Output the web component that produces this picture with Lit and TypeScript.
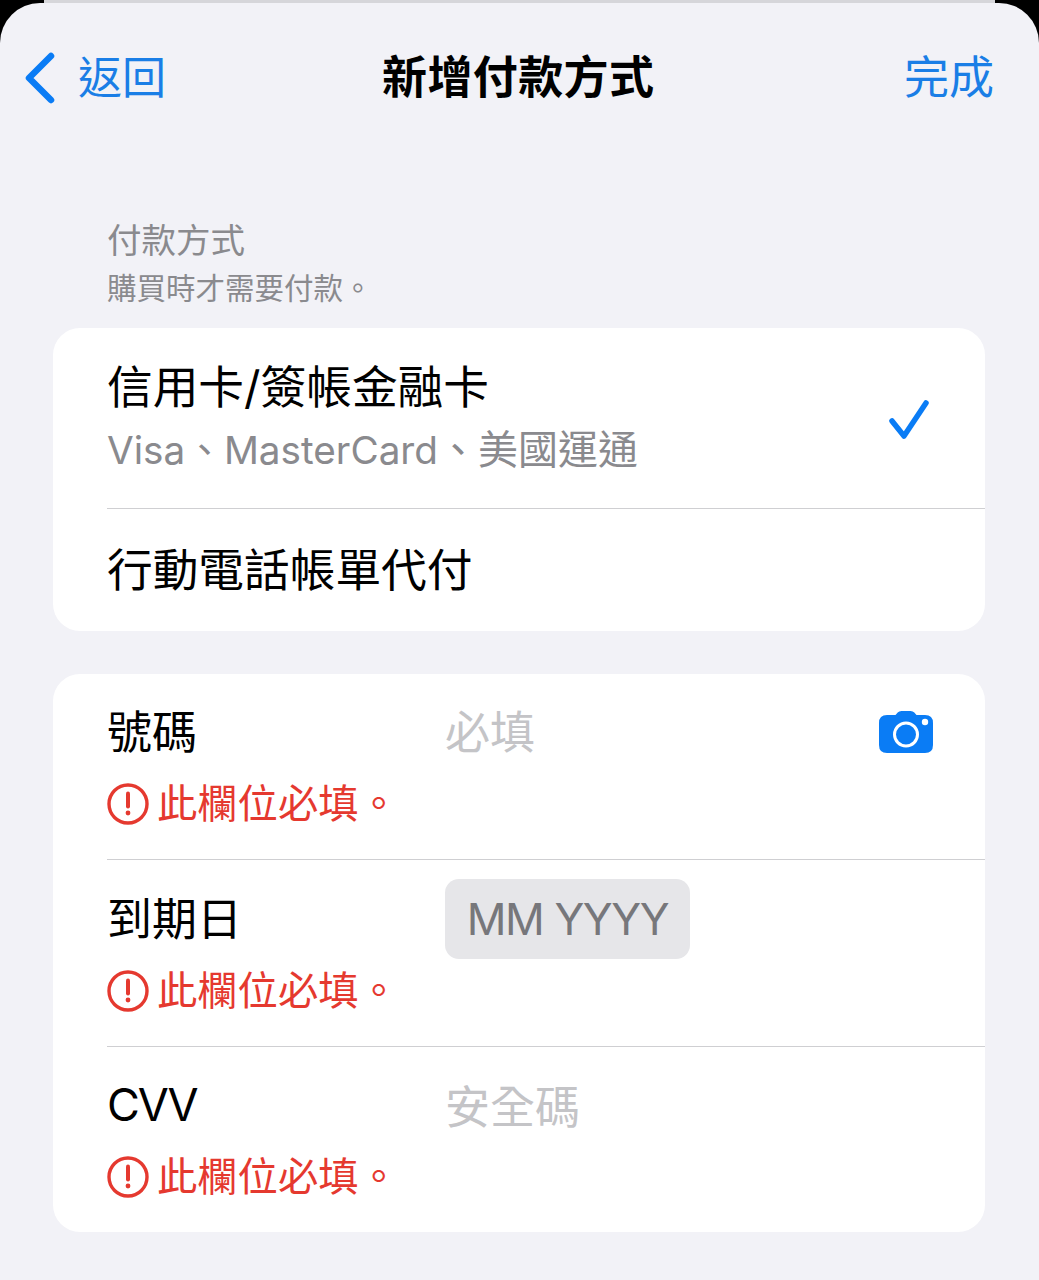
import { html, css, LitElement, svg } from 'lit'
import { customElement } from 'lit/decorators.js'

const errorIcon = svg`<svg class="err-icon" viewBox="0 0 42 42" width="42" height="42">
  <circle cx="21" cy="21" r="19" fill="none" stroke="#e5392f" stroke-width="3.4"></circle>
  <path d="M21 10.5v13" stroke="#e5392f" stroke-width="4" stroke-linecap="round"></path>
  <circle cx="21" cy="30" r="2.4" fill="#e5392f"></circle>
</svg>`

@customElement('app-root')
export class AppRoot extends LitElement {
  static styles = css`
    :host {
      display: block;
      height: 1280px;
      overflow: hidden;
      font-family: Inter, "Noto Sans CJK TC", sans-serif;
      color: #000;
    }
    .frame {
      height: 100%;
      padding-top: 3px;
      box-sizing: border-box;
      background: linear-gradient(90deg, #000 44px, #d6d6da 44px, #d6d6da 995px, #000 995px);
    }
    .sheet {
      height: 100%;
      background: #f2f2f7;
      border-radius: 40px 40px 0 0;
      padding: 0 54px 0 53px;
      box-sizing: border-box;
    }
    .nav {
      display: grid;
      grid-template-columns: 358px auto 1fr;
      align-items: center;
      height: 150px;
      margin: 0 -9px 0 -29px;
      font-size: 44px;
      line-height: 50px;
      color: #1a7ee6;
    }
    .back {
      display: flex;
      align-items: center;
      gap: 22px;
    }
    .title {
      font-size: 45px;
      font-weight: 700;
      color: #000;
      letter-spacing: 0.4px;
    }
    .done {
      text-align: right;
      font-size: 45px;
    }
    .section {
      padding: 68px 0 21px 54px;
      color: #8a8a8e;
    }
    .section-title {
      font-size: 34.5px;
      line-height: 40px;
    }
    .section-sub {
      font-size: 29.5px;
      line-height: 38px;
      margin-top: 8px;
    }
    .card {
      background: #fff;
      border-radius: 27px;
      margin-bottom: 43px;
      padding-left: 54px;
    }
    .row {
      border-bottom: 1px solid #cfcfd2;
    }
    .row:last-child { border-bottom: 0; }
    .pay {
      display: flex;
      align-items: center;
      justify-content: space-between;
      padding-right: 54px;
    }
    .pay-first { height: 180px; }
    .pay-second {
      height: 122px;
      padding-top: 2px;
      box-sizing: border-box;
    }
    .pay-text { margin-bottom: 2px; }
    .pay-main {
      font-size: 45.7px;
      line-height: 56px;
    }
    .pay-sub {
      font-size: 38.7px;
      line-height: 50px;
      color: #8a8a8e;
      margin-top: 9px;
    }
    .pay-sub span { font-size: 40px; }
    .field {
      height: 185.5px;
      padding-right: 52px;
      box-sizing: border-box;
      padding-top: 25px;
    }
    .field:first-child { padding-top: 23px; }
    .field:first-child .error { margin-top: 18px; }
    .field-top {
      display: grid;
      grid-template-columns: 338px 1fr auto;
      align-items: center;
      height: 64px;
      font-size: 45px;
    }
    .latin { letter-spacing: -2px; }
    .camera { margin-top: 4px; }
    .placeholder { color: #c4c4c7; }
    .date {
      width: 245px;
      height: 80px;
      border-radius: 14px;
      background: #e6e6e9;
      color: #77777b;
      font-size: 44px;
      display: flex;
      align-items: center;
      justify-content: center;
      letter-spacing: -1.4px;
    }
    .date-row {
      height: 187px;
      padding-top: 19px;
    }
    .date-row .field-top { height: 80px; }
    .date-label { padding-bottom: 4px; }
    .error {
      display: flex;
      align-items: center;
      gap: 8px;
      margin-top: 16px;
      font-size: 40.3px;
      line-height: 50px;
      color: #e5392f;
    }
    .date-row .error { margin-top: 7px; }
    .err-icon { flex: none; }
  `

  private _field(label: string, placeholder: string, camera = false) {
    return html`
      <div class="row field">
        <div class="field-top">
          <span class=${label === 'CVV' ? 'latin' : ''}>${label}</span>
          <span class="placeholder">${placeholder}</span>
          ${camera ? html`
            <svg class="camera" width="54" height="42" viewBox="0 0 54 42">
              <path fill="#0a7cf5" d="M8 4h8.5l2.2-2.4Q20 0 22.500 0h9q2.500 0 3.800 1.600L37.500 4H46q8 0 8 8v22q0 8-8 8H8q-8 0-8-8V12q0-8 8-8z"></path>
              <circle cx="27" cy="23.500" r="11.500" fill="none" stroke="#fff" stroke-width="3"></circle>
              <circle cx="46" cy="11" r="3.200" fill="#fff"></circle>
            </svg>` : ''}
        </div>
        <div class="error">${errorIcon}<span>此欄位必填。</span></div>
      </div>
    `
  }

  render() {
    return html`
      <div class="frame">
        <div class="sheet">
          <div class="nav">
            <div class="back">
              <svg width="32" height="52" viewBox="0 0 32 52">
                <path d="M27 4L5 26l22 22" fill="none" stroke="#0a7cf5" stroke-width="6.500" stroke-linecap="round" stroke-linejoin="round"></path>
              </svg>
              <span>返回</span>
            </div>
            <div class="title">新增付款方式</div>
            <div class="done">完成</div>
          </div>
          <div class="section">
            <div class="section-title">付款方式</div>
            <div class="section-sub">購買時才需要付款。</div>
          </div>
          <div class="card">
            <div class="row pay pay-first">
              <div class="pay-text">
                <div class="pay-main">信用卡/簽帳金融卡</div>
                <div class="pay-sub">Visa、MasterCard<span>、美國運通</span></div>
              </div>
              <svg width="44" height="44" viewBox="0 0 44 44">
                <path d="M5 25l12 15L39 7" fill="none" stroke="#0a7cf5" stroke-width="5.500" stroke-linecap="round" stroke-linejoin="round"></path>
              </svg>
            </div>
            <div class="row pay pay-second">
              <div class="pay-main">行動電話帳單代付</div>
            </div>
          </div>
          <div class="card">
            ${this._field('號碼', '必填', true)}
            <div class="row field date-row">
              <div class="field-top">
                <span class="date-label">到期日</span>
                <span class="date">MM YYYY</span>
              </div>
              <div class="error">${errorIcon}<span>此欄位必填。</span></div>
            </div>
            ${this._field('CVV', '安全碼')}
          </div>
        </div>
      </div>
    `
  }
}

declare global {
  interface HTMLElementTagNameMap {
    'app-root': AppRoot
  }
}
